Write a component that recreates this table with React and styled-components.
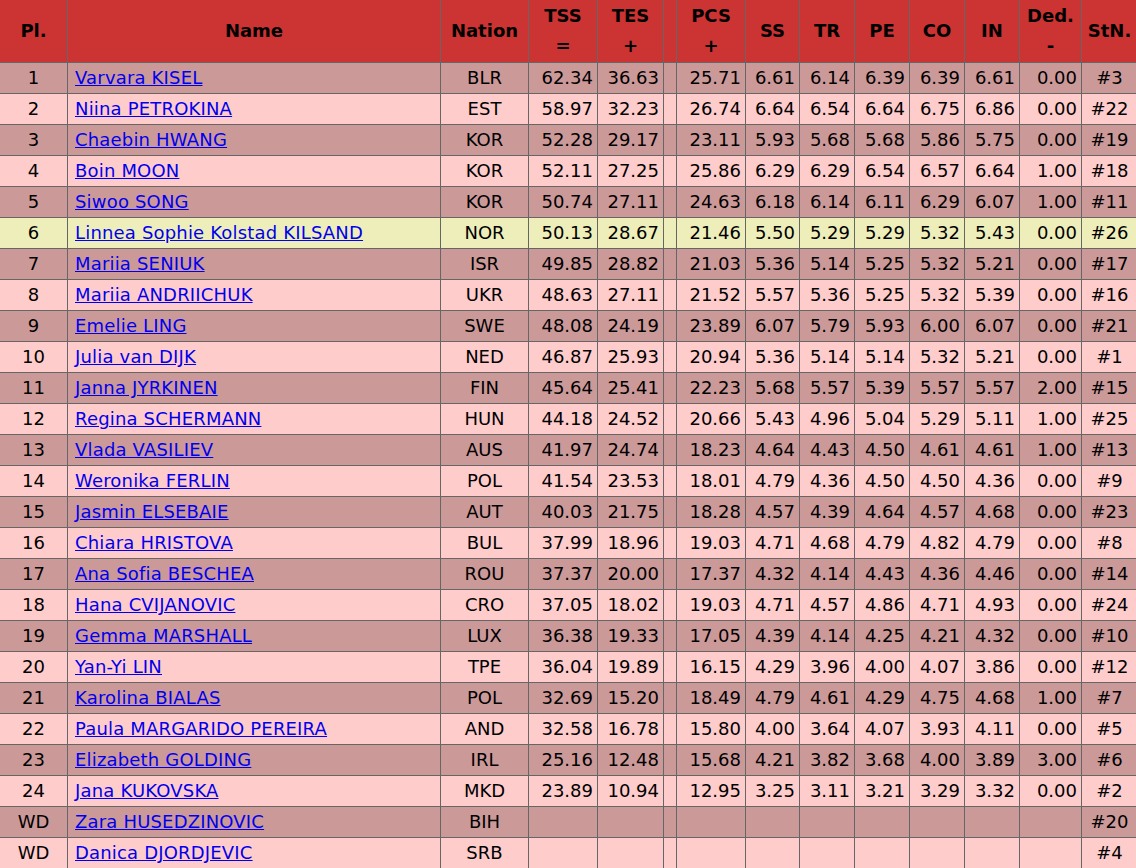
import React from 'react';
import styled, { createGlobalStyle } from 'styled-components';

const GlobalStyle = createGlobalStyle`
  body {
    margin: 0;
    overflow: hidden;
    background: #ffffff;
    font-family: "DejaVu Sans", Verdana, sans-serif;
  }
`;

const Table = styled.table`
  border-collapse: collapse;
  table-layout: fixed;
  width: 1138px;
  margin: -1px 0 0 -1px;
  font-size: 18px;
  color: #000;
`;

const Col = styled.col`
  width: ${({ $w }) => $w}px;
`;

const HeadCell = styled.th`
  background-color: #cc3333;
  border: 1px solid #666666;
  height: 62px;
  padding: 0;
  font-weight: bold;
  text-align: center;
  vertical-align: middle;
  line-height: 30px;
`;

const Row = styled.tr`
  height: 31px;
  background-color: ${({ $variant }) =>
    $variant === 'mark' ? '#eeeebb' : $variant === 'dark' ? '#cc9999' : '#ffcccc'};
`;

const Cell = styled.td`
  border: 1px solid #666666;
  padding: ${({ $align }) => ($align === 'left' ? '0 4px 0 7px' : '0 4px')};
  text-align: ${({ $align }) => $align || 'right'};
  white-space: nowrap;
  line-height: 22px;
`;

const NameLink = styled.a`
  color: #0000ee;
  text-decoration: underline;
  letter-spacing: 0.18px;
`;

const cols = [68, 373, 88, 69, 66, 13, 69, 54, 55, 55, 55, 55, 62, 56];

const skaters = [
  ['1', 'Varvara KISEL', 'BLR', '62.34', '36.63', '25.71', '6.61', '6.14', '6.39', '6.39', '6.61', '0.00', '#3'],
  ['2', 'Niina PETROKINA', 'EST', '58.97', '32.23', '26.74', '6.64', '6.54', '6.64', '6.75', '6.86', '0.00', '#22'],
  ['3', 'Chaebin HWANG', 'KOR', '52.28', '29.17', '23.11', '5.93', '5.68', '5.68', '5.86', '5.75', '0.00', '#19'],
  ['4', 'Boin MOON', 'KOR', '52.11', '27.25', '25.86', '6.29', '6.29', '6.54', '6.57', '6.64', '1.00', '#18'],
  ['5', 'Siwoo SONG', 'KOR', '50.74', '27.11', '24.63', '6.18', '6.14', '6.11', '6.29', '6.07', '1.00', '#11'],
  ['6', 'Linnea Sophie Kolstad KILSAND', 'NOR', '50.13', '28.67', '21.46', '5.50', '5.29', '5.29', '5.32', '5.43', '0.00', '#26'],
  ['7', 'Mariia SENIUK', 'ISR', '49.85', '28.82', '21.03', '5.36', '5.14', '5.25', '5.32', '5.21', '0.00', '#17'],
  ['8', 'Mariia ANDRIICHUK', 'UKR', '48.63', '27.11', '21.52', '5.57', '5.36', '5.25', '5.32', '5.39', '0.00', '#16'],
  ['9', 'Emelie LING', 'SWE', '48.08', '24.19', '23.89', '6.07', '5.79', '5.93', '6.00', '6.07', '0.00', '#21'],
  ['10', 'Julia van DIJK', 'NED', '46.87', '25.93', '20.94', '5.36', '5.14', '5.14', '5.32', '5.21', '0.00', '#1'],
  ['11', 'Janna JYRKINEN', 'FIN', '45.64', '25.41', '22.23', '5.68', '5.57', '5.39', '5.57', '5.57', '2.00', '#15'],
  ['12', 'Regina SCHERMANN', 'HUN', '44.18', '24.52', '20.66', '5.43', '4.96', '5.04', '5.29', '5.11', '1.00', '#25'],
  ['13', 'Vlada VASILIEV', 'AUS', '41.97', '24.74', '18.23', '4.64', '4.43', '4.50', '4.61', '4.61', '1.00', '#13'],
  ['14', 'Weronika FERLIN', 'POL', '41.54', '23.53', '18.01', '4.79', '4.36', '4.50', '4.50', '4.36', '0.00', '#9'],
  ['15', 'Jasmin ELSEBAIE', 'AUT', '40.03', '21.75', '18.28', '4.57', '4.39', '4.64', '4.57', '4.68', '0.00', '#23'],
  ['16', 'Chiara HRISTOVA', 'BUL', '37.99', '18.96', '19.03', '4.71', '4.68', '4.79', '4.82', '4.79', '0.00', '#8'],
  ['17', 'Ana Sofia BESCHEA', 'ROU', '37.37', '20.00', '17.37', '4.32', '4.14', '4.43', '4.36', '4.46', '0.00', '#14'],
  ['18', 'Hana CVIJANOVIC', 'CRO', '37.05', '18.02', '19.03', '4.71', '4.57', '4.86', '4.71', '4.93', '0.00', '#24'],
  ['19', 'Gemma MARSHALL', 'LUX', '36.38', '19.33', '17.05', '4.39', '4.14', '4.25', '4.21', '4.32', '0.00', '#10'],
  ['20', 'Yan-Yi LIN', 'TPE', '36.04', '19.89', '16.15', '4.29', '3.96', '4.00', '4.07', '3.86', '0.00', '#12'],
  ['21', 'Karolina BIALAS', 'POL', '32.69', '15.20', '18.49', '4.79', '4.61', '4.29', '4.75', '4.68', '1.00', '#7'],
  ['22', 'Paula MARGARIDO PEREIRA', 'AND', '32.58', '16.78', '15.80', '4.00', '3.64', '4.07', '3.93', '4.11', '0.00', '#5'],
  ['23', 'Elizabeth GOLDING', 'IRL', '25.16', '12.48', '15.68', '4.21', '3.82', '3.68', '4.00', '3.89', '3.00', '#6'],
  ['24', 'Jana KUKOVSKA', 'MKD', '23.89', '10.94', '12.95', '3.25', '3.11', '3.21', '3.29', '3.32', '0.00', '#2'],
  ['WD', 'Zara HUSEDZINOVIC', 'BIH', '', '', '', '', '', '', '', '', '', '#20'],
  ['WD', 'Danica DJORDJEVIC', 'SRB', '', '', '', '', '', '', '', '', '', '#4'],
];

const App = () => {
  return (
    <>
      <GlobalStyle />
      <Table>
        <colgroup>
          {cols.map((w, i) => (
            <Col key={i} $w={w} />
          ))}
        </colgroup>
        <thead>
          <tr>
            <HeadCell>Pl.</HeadCell>
            <HeadCell>Name</HeadCell>
            <HeadCell>Nation</HeadCell>
            <HeadCell>TSS<br />=</HeadCell>
            <HeadCell>TES<br />+</HeadCell>
            <HeadCell />
            <HeadCell>PCS<br />+</HeadCell>
            <HeadCell>SS</HeadCell>
            <HeadCell>TR</HeadCell>
            <HeadCell>PE</HeadCell>
            <HeadCell>CO</HeadCell>
            <HeadCell>IN</HeadCell>
            <HeadCell>Ded.<br />-</HeadCell>
            <HeadCell>StN.</HeadCell>
          </tr>
        </thead>
        <tbody>
          {skaters.map((s, i) => {
            const variant = s[0] === '6' ? 'mark' : i % 2 === 0 ? 'dark' : 'light';
            return (
              <Row key={s[1]} $variant={variant}>
                <Cell $align="center">{s[0]}</Cell>
                <Cell $align="left">
                  <NameLink href="#">{s[1]}</NameLink>
                </Cell>
                <Cell $align="center">{s[2]}</Cell>
                <Cell>{s[3]}</Cell>
                <Cell>{s[4]}</Cell>
                <Cell />
                <Cell>{s[5]}</Cell>
                <Cell>{s[6]}</Cell>
                <Cell>{s[7]}</Cell>
                <Cell>{s[8]}</Cell>
                <Cell>{s[9]}</Cell>
                <Cell>{s[10]}</Cell>
                <Cell>{s[11]}</Cell>
                <Cell $align="center">{s[12]}</Cell>
              </Row>
            );
          })}
        </tbody>
      </Table>
    </>
  );
};

export default App;
